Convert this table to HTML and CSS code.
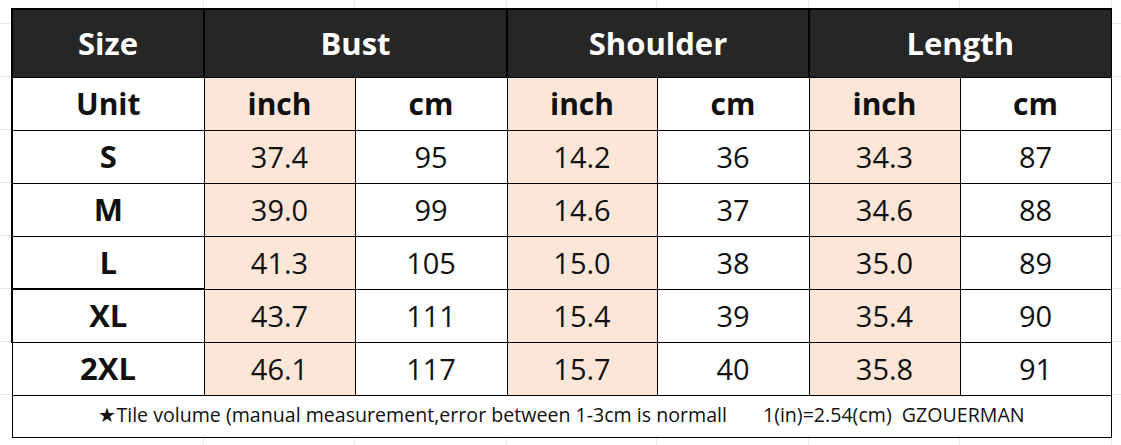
FILE: index.html
```html
<!DOCTYPE html>
<html lang="en">
<head>
    <meta charset="UTF-8">
    <meta name="viewport" content="width=device-width, initial-scale=1.0">
    <title>Size Chart</title>
    <link rel="stylesheet" href="styles.css">
</head>
<body>
    <table class="size-chart">
        <colgroup>
            <col class="c-size">
            <col class="c-a">
            <col class="c-b">
            <col class="c-c">
            <col class="c-d">
            <col class="c-e">
            <col class="c-f">
        </colgroup>
        <thead>
            <tr class="head">
                <th>Size</th>
                <th colspan="2">Bust</th>
                <th colspan="2">Shoulder</th>
                <th colspan="2">Length</th>
            </tr>
        </thead>
        <tbody>
            <tr class="units">
                <td class="first">Unit</td>
                <td class="inch">inch</td><td>cm</td>
                <td class="inch">inch</td><td>cm</td>
                <td class="inch">inch</td><td>cm</td>
            </tr>
            <tr>
                <td class="first">S</td>
                <td class="inch">37.4</td><td>95</td>
                <td class="inch">14.2</td><td>36</td>
                <td class="inch">34.3</td><td>87</td>
            </tr>
            <tr>
                <td class="first">M</td>
                <td class="inch">39.0</td><td>99</td>
                <td class="inch">14.6</td><td>37</td>
                <td class="inch">34.6</td><td>88</td>
            </tr>
            <tr>
                <td class="first">L</td>
                <td class="inch">41.3</td><td>105</td>
                <td class="inch">15.0</td><td>38</td>
                <td class="inch">35.0</td><td>89</td>
            </tr>
            <tr>
                <td class="first thick">XL</td>
                <td class="inch">43.7</td><td>111</td>
                <td class="inch">15.4</td><td>39</td>
                <td class="inch">35.4</td><td>90</td>
            </tr>
            <tr>
                <td class="first thin">2XL</td>
                <td class="inch">46.1</td><td>117</td>
                <td class="inch">15.7</td><td>40</td>
                <td class="inch">35.8</td><td>91</td>
            </tr>
            <tr class="note">
                <td colspan="7">&#9733;Tile volume (manual measurement,error between 1-3cm is normall<span class="gap"></span>1(in)=2.54(cm)&nbsp;&nbsp;GZOUERMAN</td>
            </tr>
        </tbody>
    </table>
</body>
</html>
```

FILE: styles.css
```css
body {
    margin: 0;
    padding: 8px 0 0 11px;
    font-family: "Open Sans", "Noto Sans", sans-serif;
    color: #111;
    background-color: #fff;
    background-image:
        repeating-linear-gradient(to bottom, transparent 0, transparent 23px, #e6e6e6 23px, #e6e6e6 24px, transparent 24px, transparent 53px),
        linear-gradient(to right, transparent 203px, #e9e9e9 203px, #e9e9e9 204px, transparent 204px),
        linear-gradient(to right, transparent 354px, #e9e9e9 354px, #e9e9e9 355px, transparent 355px),
        linear-gradient(to right, transparent 506px, #e9e9e9 506px, #e9e9e9 507px, transparent 507px),
        linear-gradient(to right, transparent 656px, #e9e9e9 656px, #e9e9e9 657px, transparent 657px),
        linear-gradient(to right, transparent 808px, #e9e9e9 808px, #e9e9e9 809px, transparent 809px),
        linear-gradient(to right, transparent 959px, #e9e9e9 959px, #e9e9e9 960px, transparent 960px),
        linear-gradient(to right, transparent 1111px, #e9e9e9 1111px, #e9e9e9 1112px, transparent 1112px);
    height: 445px;
    box-sizing: border-box;
    overflow: hidden;
}
.size-chart {
    border-collapse: collapse;
    table-layout: fixed;
    width: 1100px;
    background: #fff;
    border-top: 2px solid #000;
    border-right: 1px solid #000;
}
.c-size { width: 192px; }
.c-a { width: 151px; }
.c-b { width: 152px; }
.c-c { width: 150px; }
.c-d { width: 152px; }
.c-e { width: 151px; }
.c-f { width: 151px; }
td, th {
    border: 1px solid #000;
    text-align: center;
    padding: 0;
    line-height: 1;
}
.head {
    height: 68px;
}
.head th {
    background: #262626;
    color: #fff;
    font-size: 31px;
    font-weight: bold;
    border-color: #262626 #000 #000 #000;
    border-left: 2px solid #000;
}
tbody tr {
    height: 53px;
}
tbody td {
    font-size: 29px;
}
.units td {
    font-weight: bold;
    font-size: 30px;
}
.first {
    font-weight: bold;
    font-size: 31px;
    border-left: 2px solid #000;
}
.thick {
    border-top: 2px solid #000;
}
.first.thin {
    border-left: 1px solid #000;
}
.inch {
    background: #fce6d8;
}
tbody .note {
    height: 42px;
}
.note td {
    font-size: 19.6px;
    border-left: 1px solid #000;
    padding-bottom: 2px;
}
.gap {
    display: inline-block;
    width: 36px;
}
```
